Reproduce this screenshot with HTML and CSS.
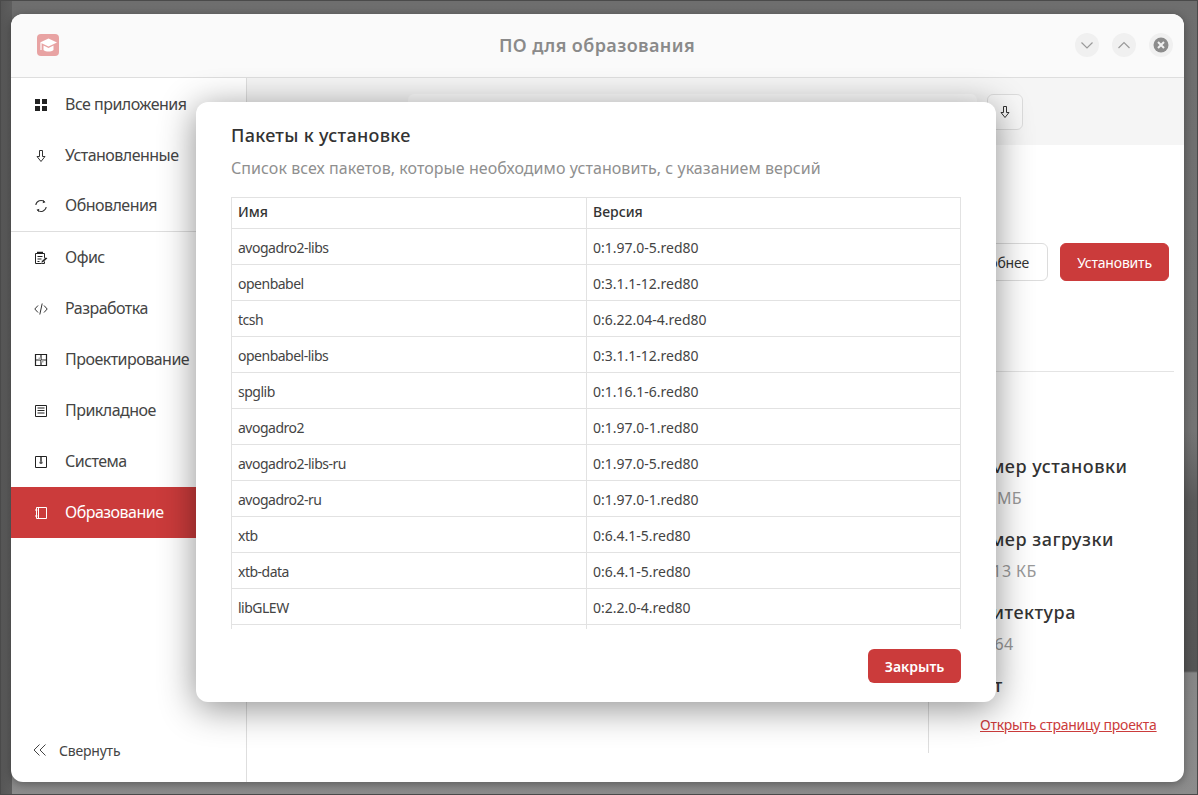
FILE: index.html
```html
<!DOCTYPE html>
<html lang="ru">
<head>
<meta charset="utf-8">
<title>ПО для образования</title>
<link rel="stylesheet" href="styles.css">
</head>
<body>
<div class="desktop">
  <div class="window">
    <header class="titlebar">
      <div class="logo">
        <svg viewBox="0 0 22 22" width="22" height="22"><path d="M3 8.500 11.500 4.500 20 8.500 11.500 12.500Z" fill="#fff"/><path d="M6.500 11.500v4.500c2.500 2 7.500 2 10 0v-4.500l-5 2.400Z" fill="#fff"/><path d="M4 9v7" stroke="#fff" stroke-width="1.200" fill="none"/></svg>
      </div>
      <h1 class="apptitle">ПО для образования</h1>
      <div class="winbtns">
        <span class="winbtn"><svg viewBox="0 0 24 24" width="24" height="24"><path d="M6.500 9.500 12 15l5.500-5.500" fill="none" stroke="#9a9a9a" stroke-width="1.200"/></svg></span>
        <span class="winbtn"><svg viewBox="0 0 24 24" width="24" height="24"><path d="M6.500 15 12 9.500l5.500 5.500" fill="none" stroke="#9a9a9a" stroke-width="1.200"/></svg></span>
        <span class="winbtn"><svg viewBox="0 0 24 24" width="24" height="24"><circle cx="12" cy="12" r="7.500" fill="#8c8c8c"/><path d="M9 9l6 6M15 9l-6 6" stroke="#f0f0f0" stroke-width="2"/></svg></span>
      </div>
    </header>
    <div class="content">
      <aside class="sidebar">
        <nav class="nav">
          <a class="navitem">
            <svg class="ico" viewBox="0 0 14 14"><path d="M1 1h5v5H1zM8 1h5v5H8zM1 8h5v5H1zM8 8h5v5H8z" fill="#222"/></svg>
            <span>Все приложения</span>
          </a>
          <a class="navitem">
            <svg class="ico" viewBox="0 0 14 14"><path d="M5.500 1.500h3v6h2.500L7 12.500 3 7.500h2.500z" fill="none" stroke="#333" stroke-width="1"/></svg>
            <span>Установленные</span>
          </a>
          <a class="navitem sep">
            <svg class="ico" viewBox="0 0 14 14"><path d="M1.800 6A5.300 5.300 0 0 1 10.500 2.800M12.200 8A5.300 5.300 0 0 1 3.500 11.200" fill="none" stroke="#333" stroke-width="1.100"/><path d="M9.200 1l2.300 2.200-2.800 1zM4.800 13l-2.300-2.200 2.800-1z" fill="#333"/></svg>
            <span>Обновления</span>
          </a>
          <a class="navitem">
            <svg class="ico" viewBox="0 0 14 14"><path d="M1.500 2.500h9v10h-9z" fill="none" stroke="#222" stroke-width="1"/><path d="M3 .8h6v1.500H3zM3.500 5h5v1h-5zM3.500 7.500h4v1h-4zM3.500 10h2v1h-2z" fill="#222"/><path d="M7 12l.5-2 4.500-4 1.500 1.500-4.500 4z" fill="#222" stroke="#fff" stroke-width=".6"/></svg>
            <span>Офис</span>
          </a>
          <a class="navitem">
            <svg class="ico" viewBox="0 0 14 14"><path d="M4 3.500.8 7 4 10.500M10 3.500 13.200 7 10 10.500M8.200 1.500 5.800 12.500" fill="none" stroke="#333" stroke-width="1"/></svg>
            <span>Разработка</span>
          </a>
          <a class="navitem">
            <svg class="ico" viewBox="0 0 14 14"><path d="M1.500 1.500h11v11h-11zM7 1.500v11M1.500 7h11" fill="none" stroke="#222" stroke-width="1.200"/><path d="M4.500 4.500h2.500V7H4.500zM7 7h2.500v2.500H7z" fill="#aaa"/></svg>
            <span>Проектирование</span>
          </a>
          <a class="navitem">
            <svg class="ico" viewBox="0 0 14 14"><path d="M1.500 1.500h11v11h-11z" fill="none" stroke="#222" stroke-width="1"/><path d="M3.500 3.500h7v1h-7zM3.500 6h7v1h-7zM3.500 8.500h7v1h-7z" fill="#222"/></svg>
            <span>Прикладное</span>
          </a>
          <a class="navitem">
            <svg class="ico" viewBox="0 0 14 14"><path d="M1.500 1.500h11v11h-11z" fill="none" stroke="#222" stroke-width="1"/><path d="M6.300 2h1.400v4H6.300z" fill="#222"/><circle cx="7" cy="7.500" r="1.600" fill="#555"/></svg>
            <span>Система</span>
          </a>
          <a class="navitem active">
            <svg class="ico" viewBox="0 0 14 14"><path d="M2.500 1.500h10v11h-10zM4.500 1.500v11M1 4h2.500M1 10h2.500" fill="none" stroke="#fff" stroke-width="1"/></svg>
            <span>Образование</span>
          </a>
        </nav>
        <a class="collapse">
          <svg class="ico" viewBox="0 0 14 14"><path d="M6.500 1.500 1 7l5.500 5.500M12.500 1.500 7 7l5.500 5.500" fill="none" stroke="#444" stroke-width="1"/></svg>
          <span>Свернуть</span>
        </a>
      </aside>
      <main class="main">
        <div class="toolbar">
          <div class="search"></div>
          <button class="iconbtn"><svg viewBox="0 0 14 14" width="14" height="14"><path d="M5.500 1.500h3v6h2.500L7 12.500 3 7.500h2.500z" fill="none" stroke="#333" stroke-width="1"/></svg></button>
        </div>
        <section class="hero">
          <button class="btn">Подробнее</button>
          <button class="btn primary">Установить</button>
        </section>
        <div class="details">
          <aside class="facts">
            <div class="fact"><h3>Размер установки</h3><p>39,4 МБ</p></div>
            <div class="fact"><h3>Размер загрузки</h3><p>128,13 КБ</p></div>
            <div class="fact"><h3>Архитектура</h3><p>x86_64</p></div>
            <div class="fact"><h3>Сайт</h3><a class="link">Открыть страницу проекта</a></div>
          </aside>
        </div>
      </main>
    </div>
    <div class="dialog">
      <h2>Пакеты к установке</h2>
      <p class="sub">Список всех пакетов, которые необходимо установить, с указанием версий</p>
      <div class="tablewrap">
        <table>
          <thead><tr><th class="namecol">Имя</th><th>Версия</th></tr></thead>
          <tbody>
            <tr><td class="name">avogadro2-libs</td><td>0:1.97.0-5.red80</td></tr>
            <tr><td class="name">openbabel</td><td>0:3.1.1-12.red80</td></tr>
            <tr><td class="name">tcsh</td><td>0:6.22.04-4.red80</td></tr>
            <tr><td class="name">openbabel-libs</td><td>0:3.1.1-12.red80</td></tr>
            <tr><td class="name">spglib</td><td>0:1.16.1-6.red80</td></tr>
            <tr><td class="name">avogadro2</td><td>0:1.97.0-1.red80</td></tr>
            <tr><td class="name">avogadro2-libs-ru</td><td>0:1.97.0-5.red80</td></tr>
            <tr><td class="name">avogadro2-ru</td><td>0:1.97.0-1.red80</td></tr>
            <tr><td class="name">xtb</td><td>0:6.4.1-5.red80</td></tr>
            <tr><td class="name">xtb-data</td><td>0:6.4.1-5.red80</td></tr>
            <tr><td class="name">libGLEW</td><td>0:2.2.0-4.red80</td></tr>
            <tr><td class="name">&nbsp;</td><td>&nbsp;</td></tr>
          </tbody>
        </table>
      </div>
      <div class="dialogfoot"><button class="close">Закрыть</button></div>
    </div>
  </div>
</div>
</body>
</html>
```
FILE: styles.css
```css
* { box-sizing: border-box; }
html, body { margin: 0; height: 100%; }
body { font-family: "Noto Sans", sans-serif; color: #333; overflow: hidden; }
.desktop {
  width: 1198px; height: 795px;
  padding: 13px 13px 12px 10px;
  border: 1px solid #4a4a4a;
  background:
    linear-gradient(to right, #565656 0, #5e5e5e 11px, transparent 11px),
    linear-gradient(to bottom, transparent 0, transparent 430px, #5a5a5a 500px, #555 670px, transparent 672px),
    linear-gradient(to bottom, #6e6e6e 0, #747474 430px, #888 700px, #8c8c8c 795px);
}
.window {
  position: relative;
  width: 100%; height: 100%;
  display: flex; flex-direction: column;
  background: #fff;
  border-radius: 12px;
  overflow: hidden;
  box-shadow: 0 2px 10px rgba(0,0,0,.35);
}
.titlebar {
  height: 64px; flex: none;
  display: grid; grid-template-columns: 1fr auto 1fr; align-items: center;
  padding: 0 11px 1px 26px;
  background: #fafafa;
  border-bottom: 1px solid #dedede;
}
.logo { width: 22px; height: 22px; border-radius: 4px; background: #e8a3a3; display: flex; }
.apptitle { margin: 0; font-size: 18px; font-weight: 600; color: #8a8a8a; letter-spacing: .4px; transform: translateX(-8px); }
.winbtns { display: flex; gap: 13px; justify-self: end; }
.winbtn { width: 24px; height: 24px; border-radius: 50%; background: #f0f0f0; display: flex; }
.content { flex: 1; display: flex; min-height: 0; }
.sidebar { width: 236px; flex: none; display: flex; flex-direction: column; border-right: 1px solid #dedede; }
.nav { flex: 1; display: flex; flex-direction: column; padding-top: 1px; }
.navitem { height: 51px; flex: none; display: flex; align-items: center; gap: 17px; padding-left: 23px; font-size: 16px; letter-spacing: -.52px; color: #444; }
.navitem span { position: relative; top: -1px; }
.navitem.sep { border-bottom: 1px solid #dedede; }
.navitem.active { background: #cb3b3b; color: #fff; }
.ico { width: 14px; height: 14px; flex: none; }
.collapse { height: 62px; display: flex; align-items: center; gap: 12px; padding: 0 0 2px 22px; font-size: 14px; letter-spacing: -.2px; color: #444; }
.main { flex: 1; min-width: 0; display: flex; flex-direction: column; }
.toolbar { height: 67px; flex: none; display: flex; justify-content: center; align-items: flex-start; gap: 10px; padding-top: 16px; background: #f5f5f5; }
.search { width: 569px; height: 36px; background: #fcfcfc; border-radius: 6px; }
.iconbtn { width: 36px; height: 36px; padding: 0; background: #f8f8f8; border: 1px solid #dcdcdc; border-radius: 6px; display: flex; align-items: center; justify-content: center; }
.hero { height: 227px; flex: none; display: flex; justify-content: flex-end; align-items: flex-start; gap: 12px; padding: 98px 5px 0 0; margin-right: 10px; border-bottom: 1px solid #e4e4e4; }
.btn { height: 38px; padding: 0 18px; font: 14px "Noto Sans", sans-serif; letter-spacing: -.2px; color: #333; background: #fff; border: 1px solid #dcdcdc; border-radius: 6px; }
.btn.primary { width: 109px; padding: 0; background: #cb3b3b; border-color: #cb3b3b; color: #fff; }
.details { flex: 1; display: flex; justify-content: flex-end; min-height: 0; padding-bottom: 29px; }
.facts { width: 256px; border-left: 1px solid #dedede; padding: 80.500px 0 0 30px; }
.fact { margin-bottom: 16px; }
.fact h3 { margin: 0; font-size: 18px; line-height: 26px; font-weight: 500; letter-spacing: .5px; color: #333; }
.fact p { margin: 7px 0 0; font-size: 16px; line-height: 24px; letter-spacing: .4px; color: #999; }
.link { display: block; margin: 17px 0 0 21px; font-size: 14px; letter-spacing: -.25px; line-height: 20px; color: #cb3b3b; text-decoration: underline; }
.dialog {
  position: absolute; left: 185px; top: 88px;
  width: 800px; height: 600px;
  padding: 19px 35px 19px;
  background: #fff;
  border-radius: 12px;
  box-shadow: 0 6px 36px rgba(0,0,0,.45);
  display: flex; flex-direction: column;
}
.dialog h2 { margin: 0; font-size: 18px; line-height: 28px; font-weight: 500; letter-spacing: .3px; color: #333; }
.sub { margin: 6px 0 0; font-size: 16px; line-height: 26px; letter-spacing: .06px; color: #8f8f8f; }
.tablewrap { margin-top: 16px; flex: 1; min-height: 0; overflow: hidden; }
table { width: 730px; border-collapse: collapse; table-layout: fixed; font-size: 14px; }
th, td { border: 1px solid #e2e2e2; padding: 0 6px; text-align: left; }
th { height: 31px; padding-bottom: 3px; font-weight: 500; color: #333; }
th.namecol { width: 355px; }
td { height: 36px; padding-top: 1px; color: #444; }
td.name { letter-spacing: -.5px; }
.dialogfoot { display: flex; justify-content: flex-end; padding-top: 20px; }
.close { width: 93px; height: 34px; padding: 0; font: 600 14px "Noto Sans", sans-serif; color: #fff; background: #cb3b3b; border: 0; border-radius: 6px; }
```
